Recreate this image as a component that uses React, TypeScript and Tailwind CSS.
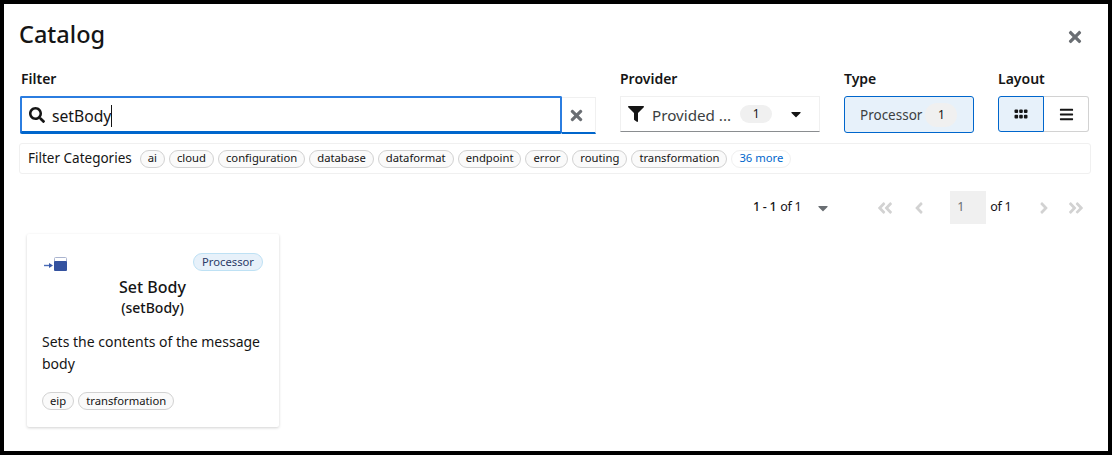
import { FaSearch, FaTimes, FaFilter, FaCaretDown, FaBars, FaAngleDoubleLeft, FaAngleLeft, FaAngleRight, FaAngleDoubleRight } from 'react-icons/fa'

const categories = ['ai', 'cloud', 'configuration', 'database', 'dataformat', 'endpoint', 'error', 'routing', 'transformation']

function Pill({ children }: { children: string }) {
  return (
    <span className="flex h-[18px] items-center rounded-full border border-[#d2d2d2] bg-[#fafafa] px-[7px] text-[11.25px] text-[#151515]">
      {children}
    </span>
  )
}

function FieldLabel({ children }: { children: string }) {
  return <div className="mb-[8px] h-[18px] text-[14px] leading-[18px] font-semibold text-[#151515]">{children}</div>
}

function GridDots() {
  return (
    <svg width="14" height="10" viewBox="0 0 14 10" fill="#151515">
      <rect x="0.5" y="0.5" width="3.6" height="3.6" rx="1" />
      <rect x="5.2" y="0.5" width="3.6" height="3.6" rx="1" />
      <rect x="9.9" y="0.5" width="3.6" height="3.6" rx="1" />
      <rect x="0.5" y="5.8" width="3.6" height="3.6" rx="1" />
      <rect x="5.2" y="5.8" width="3.6" height="3.6" rx="1" />
      <rect x="9.9" y="5.8" width="3.6" height="3.6" rx="1" />
    </svg>
  )
}

function ProcessorIcon() {
  return (
    <svg width="24" height="16" viewBox="0 0 24 16">
      <path d="M0 9.5h6" stroke="#4a6cb8" strokeWidth="1.4" />
      <path d="M5 7l4 2.5-4 2.5z" fill="#3b5ba9" />
      <rect x="10.5" y="1.5" width="12" height="4.5" rx="1" fill="#fff" stroke="#aab4cf" />
      <rect x="10" y="5" width="13" height="10" rx="1" fill="#34529f" />
    </svg>
  )
}

export default function App() {
  return (
    <div className="h-[455px] w-[1112px] border-[4px] border-black bg-white font-['Noto_Sans',sans-serif] text-[#151515]">
      <div className="flex h-[66px] items-start justify-between pr-[24px] pl-[15px]">
        <h1 className="mt-[14px] text-[23.5px] leading-[32px] font-medium text-[#151515]">Catalog</h1>
        <FaTimes className="mt-[24px] text-[18px] text-[#6a6e73]" />
      </div>

      <div className="flex gap-[24px] pl-[16px]">
        <div className="w-[576px]">
          <div className="pl-px">
            <FieldLabel>Filter</FieldLabel>
          </div>
          <div className="flex h-[38px]">
            <div className="flex w-[542px] items-center rounded-[2px] border-2 border-[#2b7de0] border-b-[3px] border-b-[#0066cc] pl-[7px]">
              <FaSearch className="mt-px text-[16px] text-[#151515]" />
              <span className="ml-[7px] pt-[4px] text-[15.7px] text-[#151515]">setBody</span>
              <span className="mt-[2px] h-[22px] w-px bg-[#151515]" />
            </div>
            <div className="mt-px flex flex-1 items-center justify-center border-t border-r border-b-2 border-t-[#f0f0f0] border-r-[#f0f0f0] border-b-[#0066cc] pr-[5px]">
              <FaTimes className="text-[17px] text-[#6a6e73]" />
            </div>
          </div>
        </div>

        <div className="w-[200px]">
          <FieldLabel>Provider</FieldLabel>
          <div className="mt-px flex h-[36px] items-center border border-[#f0f0f0] border-b-[#8a8d90] pl-[7px]">
            <FaFilter className="text-[16px] text-[#151515]" />
            <span className="ml-[8px] pt-[3px] text-[15.2px] text-[#3c3f42]">Provided ...</span>
            <span className="ml-[9px] flex h-[18px] w-[32px] items-center justify-center rounded-full bg-[#f0f0f0] text-[12px]">1</span>
            <FaCaretDown className="ml-[16px] text-[16px] text-[#151515]" />
          </div>
        </div>

        <div className="w-[130px]">
          <FieldLabel>Type</FieldLabel>
          <div className="mt-px flex h-[37px] items-center rounded-[3px] border border-[#0066cc] bg-[#e7f1fa] pl-[15px]">
            <span className="pt-[2px] text-[13.5px] text-[#3c3f42]">Processor</span>
            <span className="ml-[3px] flex h-[24px] w-[32px] items-center justify-center rounded-full bg-[#f0f0f0] text-[12px]">1</span>
          </div>
        </div>

        <div className="w-[91px]">
          <FieldLabel>Layout</FieldLabel>
          <div className="mt-px flex h-[36px]">
            <div className="flex w-[46px] items-center justify-center rounded-l-[3px] border border-[#0066cc] bg-[#e7f1fa]">
              <GridDots />
            </div>
            <div className="flex flex-1 items-center justify-center rounded-r-[3px] border border-l-0 border-[#d2d2d2]">
              <FaBars className="text-[15px] text-[#151515]" />
            </div>
          </div>
        </div>
      </div>

      <div className="mt-[9px] ml-[15px] flex h-[31px] w-[1072px] items-center gap-[4px] rounded-[3px] border border-[#f0f0f0] pl-[8px]">
        <span className="mr-[4px] text-[13.5px] text-[#151515]">Filter Categories</span>
        {categories.map((c) => (
          <Pill key={c}>{c}</Pill>
        ))}
        <span className="flex h-[18px] items-center rounded-full border border-[#f0f0f0] px-[7px] text-[11.25px] text-[#0066cc]">36 more</span>
      </div>

      <div className="mt-[17px] flex h-[33px] items-center pl-[749px] text-[12.5px] tracking-tight whitespace-nowrap">
        <span className="font-medium">1 - 1</span>
        <span className="ml-[4px]">of 1</span>
        <FaCaretDown className="ml-[14px] shrink-0 text-[16px] text-[#6a6e73]" />
        <FaAngleDoubleLeft className="ml-[45px] shrink-0 text-[18px] text-[#d2d2d2]" />
        <FaAngleLeft className="ml-[16px] shrink-0 text-[18px] text-[#d2d2d2]" />
        <div className="ml-[22px] flex h-[33px] w-[36px] shrink-0 items-center bg-[#f0f0f0] pl-[7px] text-[#6a6e73]">1</div>
        <span className="ml-[4px]">of 1</span>
        <FaAngleRight className="ml-[24px] shrink-0 text-[18px] text-[#d2d2d2]" />
        <FaAngleDoubleRight className="ml-[14px] shrink-0 text-[18px] text-[#d2d2d2]" />
      </div>

      <div className="mt-[10px] ml-[23px] h-[193px] w-[252px] rounded-[2px] pt-[19px] pr-[16px] pl-[15px] shadow-[0_1px_3px_rgba(3,3,3,0.18)]">
        <div className="flex items-start justify-between">
          <div className="mt-[3px] ml-[2px]"><ProcessorIcon /></div>
          <span className="flex h-[18px] items-center rounded-full border border-[#bee1f4] bg-[#e7f1fa] px-[8px] text-[11.25px] text-[#2b3a67]">Processor</span>
        </div>
        <div className="mt-[3px] text-center text-[16px] leading-[24px] font-medium">Set Body</div>
        <div className="text-center text-[14px] leading-[18px] font-medium">(setBody)</div>
        <p className="mt-[14px] text-[14px] leading-[22px]">Sets the contents of the message body</p>
        <div className="mt-[17px] flex gap-[4px]">
          <Pill>eip</Pill>
          <Pill>transformation</Pill>
        </div>
      </div>
    </div>
  )
}
